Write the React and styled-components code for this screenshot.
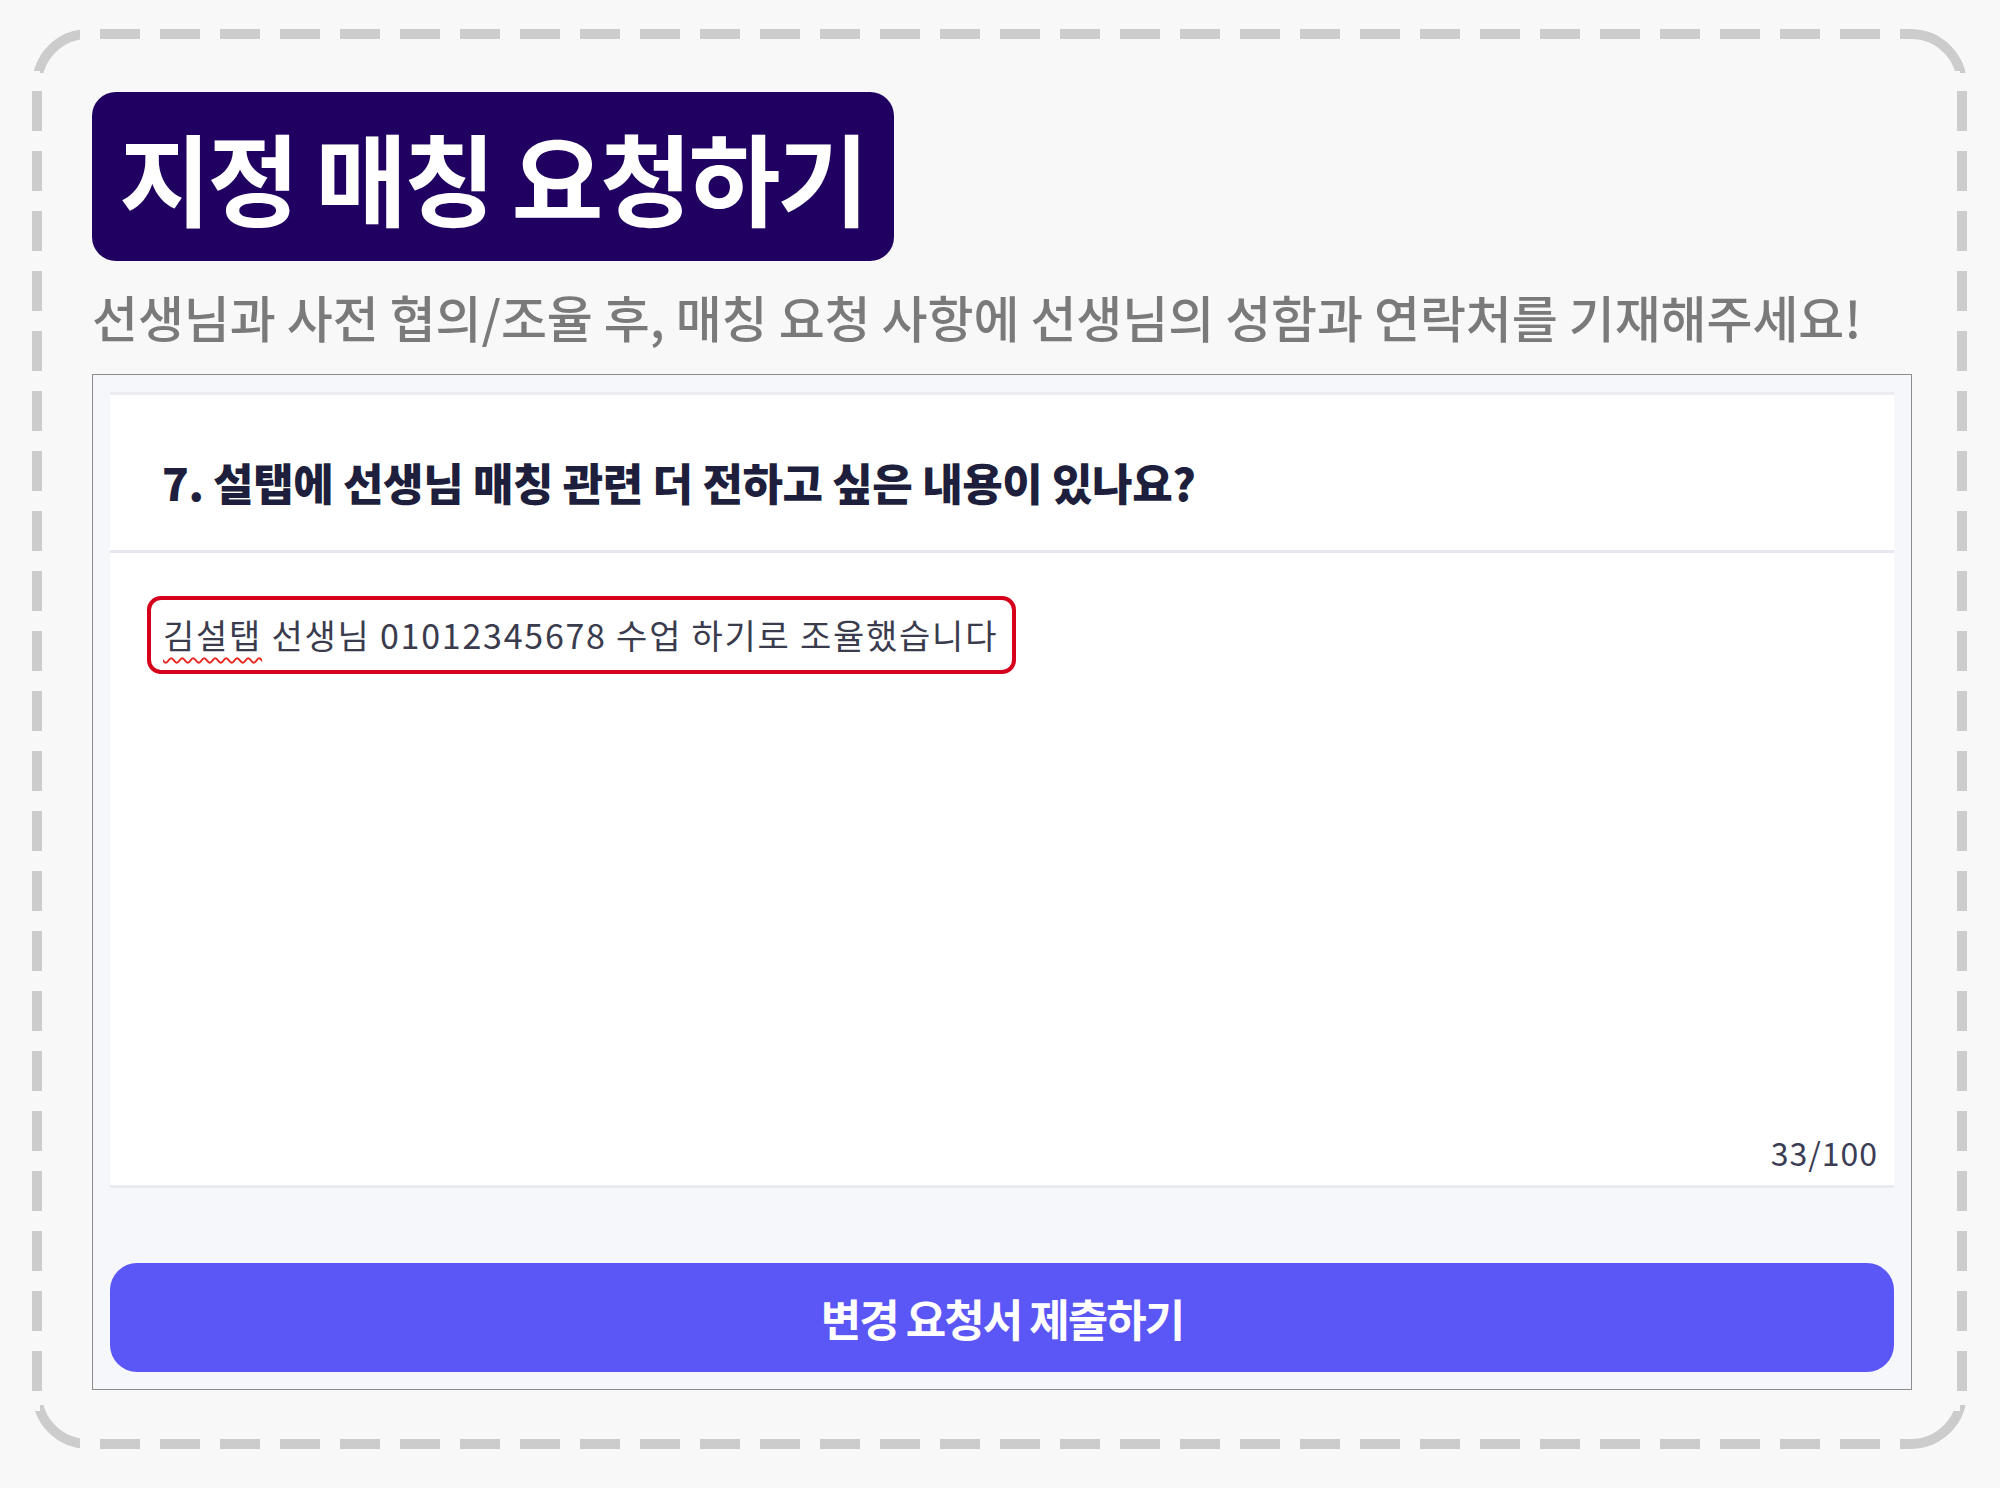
import React from "react";
import styled, { createGlobalStyle } from "styled-components";

const GlobalStyle = createGlobalStyle`
  html, body {
    margin: 0;
    padding: 0;
    background: #f8f8f8;
  }
  body {
    font-family: "Noto Sans CJK KR", "Noto Sans", sans-serif;
  }
  * {
    box-sizing: border-box;
  }
`;

const Page = styled.div`
  width: 2000px;
  height: 1488px;
  padding: 29px 33px 0 32px;
`;

const dashX = "repeating-linear-gradient(to right, #000 0 40px, transparent 40px 60px)";
const dashY = "repeating-linear-gradient(to bottom, #000 0 40px, transparent 40px 60px)";

const Frame = styled.section`
  position: relative;
  display: flex;
  flex-direction: column;
  height: 1420px;
  padding: 63px 55px 0 60px;

  /* long dashes like the design, CSS dashed is too short */
  &::before {
    content: "";
    position: absolute;
    inset: 0;
    border: 10px solid #cccccc;
    border-radius: 56px;
    pointer-events: none;
    -webkit-mask-image: ${dashX}, ${dashX}, ${dashY}, ${dashY};
    -webkit-mask-size: 100% 44px, 100% 44px, 44px 100%, 44px 100%;
    -webkit-mask-position: 8px 0, 8px 100%, 0 2px, 100% 2px;
    -webkit-mask-repeat: no-repeat;
    mask-image: ${dashX}, ${dashX}, ${dashY}, ${dashY};
    mask-size: 100% 44px, 100% 44px, 44px 100%, 44px 100%;
    mask-position: 8px 0, 8px 100%, 0 2px, 100% 2px;
    mask-repeat: no-repeat;
  }
`;

const TitleBadge = styled.h1`
  align-self: flex-start;
  margin: 0;
  padding: 34px 29px 35px 27px;
  background: #200060;
  border-radius: 24px;
  color: #ffffff;
  font-size: 100px;
  font-weight: 700;
  line-height: 100px;
  letter-spacing: -3.5px;
`;

const Subtitle = styled.p`
  margin: 25px 0 28px;
  color: #7a7a7a;
  font-size: 50px;
  font-weight: 500;
  line-height: 60px;
  letter-spacing: -0.1px;
  white-space: nowrap;
`;

const Panel = styled.div`
  display: flex;
  flex-direction: column;
  padding: 17px;
  border: 1px solid #8c8c8c;
  background: #f6f7fb;
`;

const QuestionBlock = styled.div`
  padding: 57px 52px 38px;
  background: #ffffff;
  border-top: 3px solid #ebecf4;
  border-bottom: 3px solid #e6e7f0;
`;

const QuestionText = styled.h2`
  margin: 0;
  color: #1e1f3d;
  font-size: 44px;
  font-weight: 800;
  line-height: 60px;
  letter-spacing: -0.4px;
`;

const AnswerBlock = styled.div`
  display: flex;
  flex-direction: column;
  height: 635px;
  padding: 43px 16px 15px 37px;
  background: #ffffff;
  border-bottom: 3px solid #e9eaef;
`;

const Highlight = styled.div`
  align-self: flex-start;
  padding: 0 14px 0 12px;
  border: 4px solid #d6001c;
  border-radius: 14px;
  color: #3a3c4e;
  font-size: 34px;
  line-height: 70px;
  letter-spacing: 1.75px;
  white-space: nowrap;
`;

const Misspelled = styled.span`
  text-decoration: underline wavy #e8261f;
  text-decoration-thickness: 2px;
  text-underline-offset: 8px;
  text-decoration-skip-ink: none;
`;

const Counter = styled.div`
  margin-top: auto;
  align-self: flex-end;
  color: #3b3d55;
  font-size: 32px;
  line-height: 36px;
  letter-spacing: 1px;
`;

const SubmitButton = styled.button`
  margin-top: 75px;
  height: 109px;
  border: none;
  border-radius: 27px;
  background: #5b56f6;
  color: #ffffff;
  font-family: inherit;
  font-size: 44px;
  font-weight: 700;
  letter-spacing: -2px;
  cursor: pointer;
`;

export default function App() {
  return (
    <>
      <GlobalStyle />
      <Page>
        <Frame>
          <TitleBadge>지정 매칭 요청하기</TitleBadge>
          <Subtitle>
            선생님과 사전 협의/조율 후, 매칭 요청 사항에 선생님의 성함과 연락처를 기재해주세요!
          </Subtitle>
          <Panel>
            <QuestionBlock>
              <QuestionText>
                7. 설탭에 선생님 매칭 관련 더 전하고 싶은 내용이 있나요?
              </QuestionText>
            </QuestionBlock>
            <AnswerBlock>
              <Highlight>
                <Misspelled>김설탭</Misspelled> 선생님 01012345678 수업 하기로 조율했습니다
              </Highlight>
              <Counter>33/100</Counter>
            </AnswerBlock>
            <SubmitButton>변경 요청서 제출하기</SubmitButton>
          </Panel>
        </Frame>
      </Page>
    </>
  );
}
